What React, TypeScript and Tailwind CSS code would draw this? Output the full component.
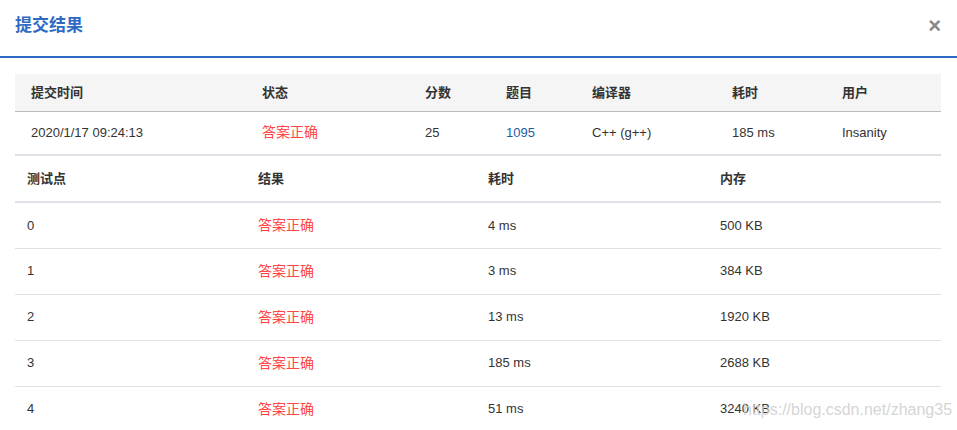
import { FC } from 'react';

type Case = { id: number; time: string; mem: string };

const cases: Case[] = [
    { id: 0, time: '4 ms', mem: '500 KB' },
    { id: 1, time: '3 ms', mem: '384 KB' },
    { id: 2, time: '13 ms', mem: '1920 KB' },
    { id: 3, time: '185 ms', mem: '2688 KB' },
    { id: 4, time: '51 ms', mem: '3240 KB' },
];

const font = { fontFamily: '"Liberation Sans", "Noto Sans CJK SC", sans-serif' };

const CaseRow: FC<{ c: Case }> = ({ c }) => (
    <tr className="h-[46px] border-b border-[#dee2e6]">
        <td className="pl-3">{c.id}</td>
        <td className="pl-3 text-[14px] text-[#ff4545]">答案正确</td>
        <td className="pl-3">{c.time}</td>
        <td className="pl-3">{c.mem}</td>
    </tr>
);

export default function App() {
    return (
        <div
            className="relative h-[430px] w-[957px] overflow-hidden bg-white text-[13px] text-[#333]"
            style={font}
        >
            <div className="flex h-[58px] items-center justify-between border-b-2 border-[#2f6bc4] pl-[15px] pr-[16px] pb-[4px]">
                <h1 className="text-[17px] font-bold text-[#2f6bc4]">提交结果</h1>
                <span className="text-[22px] font-bold leading-none text-[#888]">×</span>
            </div>

            <div className="pl-[15px] pr-[16px] pt-[16px]">
                <table className="w-full table-fixed border-collapse text-left">
                    <colgroup>
                        <col className="w-[231px]" />
                        <col className="w-[163px]" />
                        <col className="w-[81px]" />
                        <col className="w-[86px]" />
                        <col className="w-[140px]" />
                        <col className="w-[110px]" />
                        <col />
                    </colgroup>
                    <thead>
                        <tr className="h-[37px] border-b border-[#bbb] bg-[#f5f5f5] font-bold">
                            <th className="pl-4">提交时间</th>
                            <th className="pl-4">状态</th>
                            <th className="pl-4">分数</th>
                            <th className="pl-4">题目</th>
                            <th className="pl-4">编译器</th>
                            <th className="pl-4">耗时</th>
                            <th className="pl-4">用户</th>
                        </tr>
                    </thead>
                    <tbody>
                        <tr className="h-[44px] border-b-2 border-[#dee2e6]">
                            <td className="pl-4">2020/1/17 09:24:13</td>
                            <td className="pl-4 text-[14px] text-[#ff4545]">答案正确</td>
                            <td className="pl-4">25</td>
                            <td className="pl-4 text-[#1d5ba4]">1095</td>
                            <td className="pl-4">C++ (g++)</td>
                            <td className="pl-4">185 ms</td>
                            <td className="pl-4">Insanity</td>
                        </tr>
                    </tbody>
                </table>

                <table className="w-full table-fixed border-collapse text-left">
                    <thead>
                        <tr className="h-[46px] border-b-2 border-[#dee2e6] font-bold">
                            <th className="w-[231px] pl-3">测试点</th>
                            <th className="w-[230px] pl-3">结果</th>
                            <th className="w-[232px] pl-3">耗时</th>
                            <th className="pl-3">内存</th>
                        </tr>
                    </thead>
                    <tbody>
                        {cases.map((c) => (
                            <CaseRow key={c.id} c={c} />
                        ))}
                    </tbody>
                </table>
            </div>

            <span className="pointer-events-none absolute left-[743px] top-[398px] text-[16px] text-[#cfcfcf]/90">
                https://blog.csdn.net/zhang35
            </span>
        </div>
    );
}
